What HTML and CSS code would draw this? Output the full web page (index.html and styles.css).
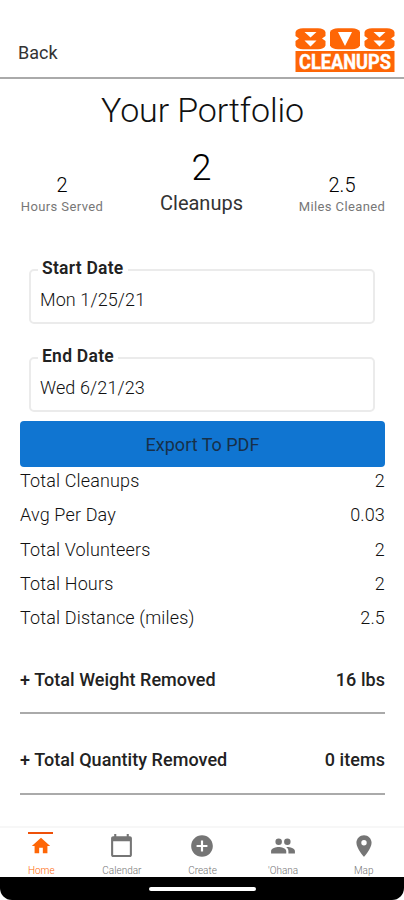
FILE: index.html
```html
<!DOCTYPE html>
<html lang="en">
<head>
<meta charset="utf-8">
<title>Your Portfolio</title>
<link rel="stylesheet" href="styles.css">
</head>
<body>
<div class="app">
  <header class="topbar">
    <a class="back">Back</a>
    <svg class="logo" viewBox="0 0 100 44" role="img" aria-label="808 Cleanups">
      <g fill="#fe6606">
        <path d="M0.500 4Q2 0.300 8 0.300H23Q29 0.300 30.500 4V8L27 10.500L30.500 13V17.500Q29 21.300 23 21.300H8Q2 21.300 0.500 17.500V13L4 10.500L0.500 8Z"/>
        <path d="M35 4Q37 0.300 43 0.300H57Q63 0.300 65 4V17.500Q63 21.300 57 21.300H43Q37 21.300 35 17.500Z"/>
        <path d="M69.500 4Q71 0.300 77 0.300H92Q98 0.300 99.500 4V8L96 10.500L99.500 13V17.500Q98 21.300 92 21.300H77Q71 21.300 69.500 17.500V13L73 10.500L69.500 8Z"/>
        <rect x="0.500" y="23" width="99" height="21"/>
      </g>
      <path fill="#fff" d="M9.500 4H21.500L15.500 9.500ZM9.500 12.500H21.500L15.500 18.500ZM43 4H57L50 18ZM78.500 4H90.500L84.500 9.500ZM78.500 12.500H90.500L84.500 18.500Z"/>
      <text class="logo-text" x="4" y="40.800" textLength="92" lengthAdjust="spacingAndGlyphs">CLEANUPS</text>
    </svg>
  </header>
  <main class="content">
    <h1 class="title">Your Portfolio</h1>
    <section class="stats">
      <div class="stat"><span class="num">2</span><span class="cap">Hours Served</span></div>
      <div class="stat stat-main"><span class="num">2</span><span class="cap">Cleanups</span></div>
      <div class="stat"><span class="num">2.5</span><span class="cap">Miles Cleaned</span></div>
    </section>
    <fieldset class="field"><legend>Start Date</legend><div class="value">Mon 1/25/21</div></fieldset>
    <fieldset class="field"><legend>End Date</legend><div class="value">Wed 6/21/23</div></fieldset>
    <button class="export">Export To PDF</button>
    <section class="rows">
      <div class="row"><span>Total Cleanups</span><span>2</span></div>
      <div class="row"><span>Avg Per Day</span><span>0.03</span></div>
      <div class="row"><span>Total Volunteers</span><span>2</span></div>
      <div class="row"><span>Total Hours</span><span>2</span></div>
      <div class="row"><span>Total Distance (miles)</span><span>2.5</span></div>
    </section>
    <div class="total total-first"><span>+ Total Weight Removed</span><span>16 lbs</span></div>
    <div class="total"><span>+ Total Quantity Removed</span><span>0 items</span></div>
  </main>
  <nav class="tabs">
    <a class="tab active"><svg viewBox="0 0 24 24"><path d="M10 20v-6h4v6h5v-8h3L12 3 2 12h3v8z"/></svg><span>Home</span></a>
    <a class="tab"><svg class="calendar" viewBox="0 0 24 24"><path d="M20 3h-1V1h-2v2H7V1H5v2H4c-1.100 0-2 .9-2 2v16c0 1.100.9 2 2 2h16c1.100 0 2-.9 2-2V5c0-1.100-.9-2-2-2zm0 18H4V8h16v13z"/></svg><span>Calendar</span></a>
    <a class="tab"><svg class="large" viewBox="0 0 24 24"><path d="M12 2C6.480 2 2 6.480 2 12s4.480 10 10 10 10-4.480 10-10S17.520 2 12 2zm5 11h-4v4h-2v-4H7v-2h4V7h2v4h4v2z"/></svg><span>Create</span></a>
    <a class="tab"><svg class="large" viewBox="0 0 24 24"><path d="M8 11a3 3 0 1 0 0-6 3 3 0 0 0 0 6zM16 11a3 3 0 1 0 0-6 3 3 0 0 0 0 6zM8 13c-2.330 0-7 1.170-7 3.500V19h14v-2.500C15 14.170 10.330 13 8 13zM16 13c-.29 0-.62.02-.97.05 1.160.84 1.970 1.970 1.970 3.450V19h6v-2.500c0-2.330-4.670-3.500-7-3.500z"/></svg><span>'Ohana</span></a>
    <a class="tab"><svg class="large" viewBox="0 0 24 24"><path d="M12 2C8.130 2 5 5.130 5 9c0 5.250 7 13 7 13s7-7.750 7-13c0-3.870-3.130-7-7-7zm0 9.500a2.500 2.500 0 1 1 0-5 2.500 2.500 0 0 1 0 5z"/></svg><span>Map</span></a>
  </nav>
  <div class="system"><div class="gesture"></div></div>
</div>
</body>
</html>
```
FILE: styles.css
```css
* { box-sizing: border-box; }
body { margin: 0; background: #fff; font-family: Roboto, "Liberation Sans", sans-serif; color: #222; }
.app { width: 404px; height: 900px; display: flex; flex-direction: column; overflow: hidden; }
.topbar { height: 79px; flex: none; border-bottom: 2px solid #aaa; display: flex; justify-content: space-between; align-items: flex-end; padding: 0 9px 5px 18px; }
.back { font-size: 18px; line-height: 22px; margin-bottom: 8px; color: #333; }
.logo { width: 100px; height: 44px; overflow: visible; }
.logo-text { fill: #fff; font: 700 20px Roboto, sans-serif; stroke: #fff; stroke-width: 0.400px; }
.content { flex: 1; padding: 0 19px 0 20px; display: flex; flex-direction: column; }
.title { margin: 10px 0 0; height: 42px; line-height: 42px; text-align: center; font-size: 34px; font-weight: 350; letter-spacing: -0.100px; color: #111; }
.stats { margin-top: 14px; height: 72px; display: flex; justify-content: space-between; align-items: flex-end; }
.stat { width: 84px; display: flex; flex-direction: column; align-items: center; white-space: nowrap; }
.stat:last-child { position: relative; left: -1px; }
.stat .num { font-size: 20px; line-height: 24px; font-weight: 300; color: #000; }
.stat .cap { font-size: 13px; line-height: 20px; color: #777; letter-spacing: 0.400px; }
.stat-main { width: 110px; position: relative; left: -1px; }
.stat-main .num { font-size: 36px; line-height: 42px; margin-bottom: 1px; }
.stat-main .cap { font-size: 20px; line-height: 26px; color: #333; letter-spacing: 0; margin-bottom: 1px; }
.field { width: 346px; height: 66px; margin: 41px 0 0 9px; padding: 0 10px; border: 2px solid #ebebeb; border-radius: 5px; }
.field + .field { margin-top: 22px; }
.field legend { margin-left: -3px; padding: 0 4px; height: 24px; font-size: 17.500px; line-height: 20px; font-weight: 600; letter-spacing: 0.250px; color: #222; }
.value { margin: 7px 0 0 -1px; font-size: 18px; line-height: 22px; font-weight: 300; letter-spacing: 0.100px; color: #111; }
.export { margin: 9px 0 0; height: 46px; border: 0; border-radius: 4px; background: #1075d1; color: #173049; font: 400 18px Roboto, sans-serif; letter-spacing: 0; }
.row { height: 34.250px; display: flex; justify-content: space-between; font-size: 18px; line-height: 28px; font-weight: 300; letter-spacing: 0.150px; color: #111; }
.total { height: 81px; border-bottom: 2px solid #aaa; display: flex; justify-content: space-between; align-items: center; font-size: 18px; font-weight: 500; letter-spacing: 0.050px; color: #222; padding-top: 12px; }
.total-first { height: 76px; padding-top: 9px; }
.tabs { height: 51px; flex: none; border-top: 2px solid #f7f7f7; display: grid; grid-template-columns: repeat(5, 1fr); padding-left: 1px; }
.tab { display: flex; flex-direction: column; align-items: center; color: #757575; font-size: 10px; position: relative; }
.tab svg { width: 22px; height: 22px; fill: currentColor; margin-top: 7px; }
.tab .large { width: 26px; height: 26px; margin-top: 5px; }
.tab .calendar { width: 25px; height: 25px; margin-top: 5px; }
.tab span { line-height: 12px; margin-top: auto; font-weight: 300; }
.tab.active { color: #fe6606; }
.tab.active::before { content: ""; position: absolute; top: 4px; left: 27px; width: 25px; height: 2px; background: #ee5009; }
.system { height: 23px; flex: none; background: #000; border-radius: 0 0 12px 12px; display: flex; justify-content: center; padding-top: 10px; }
.gesture { width: 107px; height: 4px; border-radius: 2px; background: #fff; }
```
